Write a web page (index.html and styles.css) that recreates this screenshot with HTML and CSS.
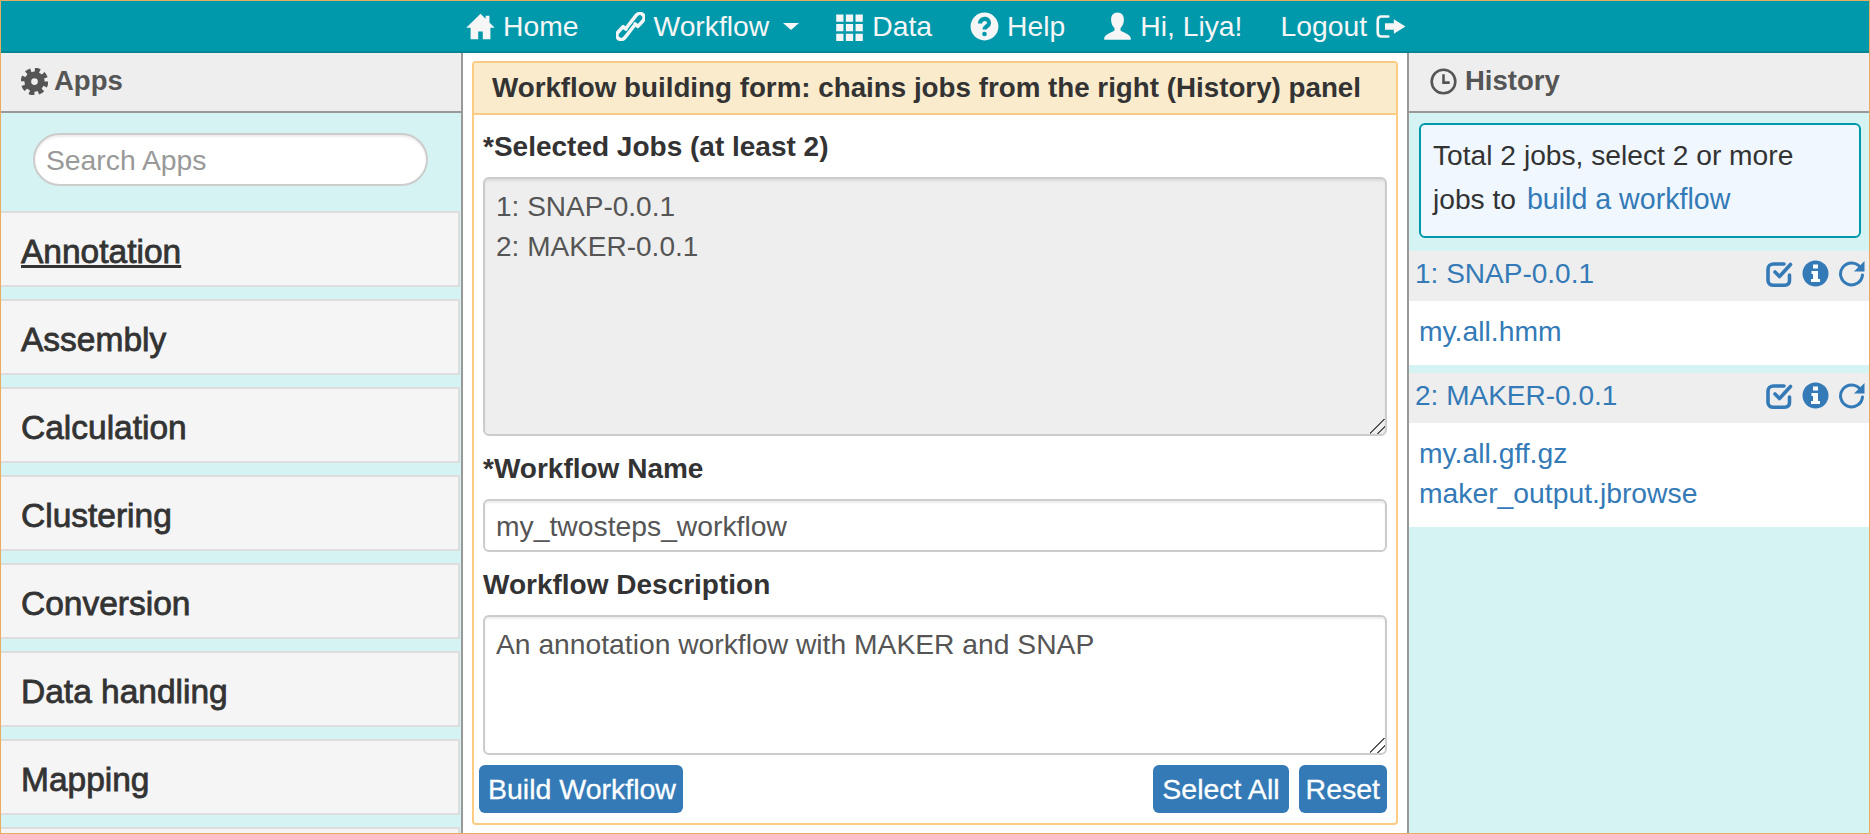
FILE: index.html
```html
<!DOCTYPE html>
<html lang="en">
<head>
  <meta charset="UTF-8">
  <title>Workflow</title>
  <link rel="stylesheet" href="styles.css">
</head>
<body>
<div class="app">

  <nav class="navbar">
    <a class="nav-item">
      <svg class="ico" viewBox="0 0 24 24"><path d="M12 1.5 .2 13h3.6v9.600h6.300v-6.400h3.800v6.400h6.300V13h3.600l-4.400-4.300V3h-3.200v2.600z"/></svg>
      Home
    </a>
    <a class="nav-item">
      <svg class="ico" viewBox="2 2 20 20"><path class="line" d="M9.500 12.500 16 4.200c1.500-1.600 3.300-1.500 4.500-.4s1.300 3 0 4.400l-3.400 3.700-2-1.700M14.500 11.500 8 19.800c-1.500 1.600-3.300 1.500-4.500.4s-1.300-3 0-4.400l3.400-3.700 2 1.700"/></svg>
      Workflow <span class="caret"></span>
    </a>
    <a class="nav-item">
      <svg class="ico" viewBox="0 0 24 24"><path d="M1 2h6v6H1zM9 2h6v6H9zM17 2h6v6h-6zM1 10h6v6H1zM9 10h6v6H9zM17 10h6v6h-6zM1 18h6v6H1zM9 18h6v6H9zM17 18h6v6h-6z"/></svg>
      Data
    </a>
    <a class="nav-item">
      <svg class="ico" viewBox="0 0 24 24"><circle cx="12" cy="12" r="11.500"/><path class="cut" d="M8.300 9.500c0-5 7.500-5 7.500-.5 0 2.800-3.800 2.800-3.800 5.500"/><circle class="cut-dot" cx="12" cy="18.200" r="1.900"/></svg>
      Help
    </a>
    <a class="nav-item">
      <svg class="ico" viewBox="0 0 24 24"><path d="M12 .5c3.500 0 5.300 2.500 5.300 6 0 3-1.300 5.500-2.800 6.800v1.900c0 1.500 8.500 2.800 8.500 6.800v1H1v-1c0-4 8.500-5.300 8.500-6.800v-1.900C8 12 6.700 9.500 6.700 6.500c0-3.500 1.800-6 5.300-6z"/></svg>
      Hi, Liya!
    </a>
    <a class="nav-item">
      Logout
      <svg class="ico ico-wide" viewBox="0 0 28 24"><path class="line" d="M12 3H6C3.500 3 2.500 4.500 2.500 6.500v11c0 2 1 3.500 3.500 3.500h6"/><path d="M17 5.500 27.500 12 17 18.500V15H9V9h8z"/></svg>
    </a>
  </nav>

  <div class="columns">

    <aside class="side-left">
      <div class="side-head">
        <svg class="ico-head" viewBox="0 0 24 24"><circle class="gear-ring" cx="12" cy="12" r="6"/><circle class="gear-teeth" cx="12" cy="12" r="10"/></svg>
        Apps
      </div>
      <div class="search-wrap">
        <input class="search" type="text" placeholder="Search Apps">
      </div>
      <ul class="app-list">
        <li class="app-item"><a class="active">Annotation</a></li>
        <li class="app-item"><a>Assembly</a></li>
        <li class="app-item"><a>Calculation</a></li>
        <li class="app-item"><a>Clustering</a></li>
        <li class="app-item"><a>Conversion</a></li>
        <li class="app-item"><a>Data handling</a></li>
        <li class="app-item"><a>Mapping</a></li>
        <li class="app-item"></li>
      </ul>
    </aside>

    <main class="middle">
      <form class="panel">
        <div class="panel-head">Workflow building form: chains jobs from the right (History) panel</div>
        <div class="panel-body">
          <label class="field-label first" for="jobs">*Selected Jobs (at least 2)</label>
          <textarea class="field jobs" id="jobs" readonly>1: SNAP-0.0.1
2: MAKER-0.0.1</textarea>

          <label class="field-label" for="wfname">*Workflow Name</label>
          <input class="field wfname" id="wfname" type="text" value="my_twosteps_workflow">

          <label class="field-label" for="wfdesc">Workflow Description</label>
          <textarea class="field desc" id="wfdesc">An annotation workflow with MAKER and SNAP</textarea>

          <div class="actions">
            <button class="btn btn-build" type="button">Build Workflow</button>
            <div class="actions-right">
              <button class="btn btn-select" type="button">Select All</button>
              <button class="btn btn-reset" type="button">Reset</button>
            </div>
          </div>
        </div>
      </form>
    </main>

    <aside class="side-right">
      <div class="side-head side-head-right">
        <svg class="ico-head" viewBox="0 0 24 24"><circle class="clock" cx="12" cy="12" r="10.500"/><path class="clock" d="M12 5.500V13h5.500"/></svg>
        History
      </div>
      <div class="notice">
        <div>Total 2 jobs, select 2 or more</div>
        <div>jobs to <a class="link notice-link">build a workflow</a></div>
      </div>

      <div class="job-head">
        <a class="link">1: SNAP-0.0.1</a>
        <span class="job-tools">
          <svg class="tool" viewBox="0 0 27 27"><path class="tool-line" d="M23.500 15v5.500c0 3-2 4.700-5 4.700H7.500c-3 0-5.500-1.700-5.500-4.700V9c0-3 2.500-5 5.500-5H18"/><path class="tool-line" d="m9 12 4.500 4.500L24.500 4.500"/></svg>
          <svg class="tool" viewBox="0 0 27 27"><circle class="tool-fill" cx="13.500" cy="13.500" r="13"/><path class="tool-cut" d="M11 4.500h5v4h-5zM9.500 11h6.500v8h2v3h-9v-3h2v-5h-1.500z"/></svg>
          <svg class="tool" viewBox="0 0 27 27"><path class="tool-line thin" d="M22.500 7.500A11 11 0 1 0 24.500 15"/><path class="tool-fill" d="M26.500 1v10.500H16z"/></svg>
        </span>
      </div>
      <div class="job-files">
        <a class="link">my.all.hmm</a>
      </div>

      <div class="job-head">
        <a class="link">2: MAKER-0.0.1</a>
        <span class="job-tools">
          <svg class="tool" viewBox="0 0 27 27"><path class="tool-line" d="M23.500 15v5.500c0 3-2 4.700-5 4.700H7.500c-3 0-5.500-1.700-5.500-4.700V9c0-3 2.500-5 5.500-5H18"/><path class="tool-line" d="m9 12 4.500 4.500L24.500 4.500"/></svg>
          <svg class="tool" viewBox="0 0 27 27"><circle class="tool-fill" cx="13.500" cy="13.500" r="13"/><path class="tool-cut" d="M11 4.500h5v4h-5zM9.500 11h6.500v8h2v3h-9v-3h2v-5h-1.500z"/></svg>
          <svg class="tool" viewBox="0 0 27 27"><path class="tool-line thin" d="M22.500 7.500A11 11 0 1 0 24.500 15"/><path class="tool-fill" d="M26.500 1v10.500H16z"/></svg>
        </span>
      </div>
      <div class="job-files">
        <a class="link">my.all.gff.gz</a>
        <a class="link">maker_output.jbrowse</a>
      </div>
    </aside>

  </div>
</div>
</body>
</html>
```

FILE: styles.css
```css
* { box-sizing: border-box; }
html, body { margin: 0; height: 100%; overflow: hidden; }
body { font-family: "Liberation Sans", Arial, sans-serif; font-size: 28px; color: #333; background: #fff; }

.app { height: 834px; border: 1px solid #e9ad62; display: flex; flex-direction: column; overflow: hidden; }

/* top bar */
.navbar { height: 52px; flex: none; background: #0099ac; border-bottom: 2px solid #008592; display: flex; justify-content: center; align-items: center; gap: 38px; padding-left: 2px; color: #f6f6f6; font-size: 28.300px; }
.nav-item { display: flex; align-items: center; gap: 8px; line-height: 40px; }
.ico { width: 29px; height: 29px; fill: currentColor; flex: none; }
.ico-wide { width: 31px; }
.ico .line { fill: none; stroke: currentColor; stroke-width: 2.400; stroke-linecap: round; stroke-linejoin: round; }
.ico .cut { fill: none; stroke: #0099ac; stroke-width: 3.400; }
.ico .cut-dot { fill: #0099ac; }
.caret { width: 0; height: 0; margin: 0 -2px 0 6px; border-top: 7px solid currentColor; border-left: 8px solid transparent; border-right: 8px solid transparent; }

.columns { flex: 1; min-height: 0; display: grid; grid-template-columns: 462px 1fr 462px; }

/* side panels */
.side-left { background: #d5f3f3; border-right: 2px solid #999; overflow: hidden; }
.side-right { background: #d5f3f3; border-left: 2px solid #999; overflow: hidden; }
.side-head { height: 60px; background: #eee; border-bottom: 2px solid #999; display: flex; align-items: center; gap: 6px; padding: 0 0 2px 20px; font-weight: bold; font-size: 27.500px; color: #555; }
.side-head-right { padding-left: 21px; gap: 8px; }
.ico-head { width: 27px; height: 27px; flex: none; }
.gear-ring { fill: none; stroke: #555; stroke-width: 6; }
.gear-teeth { fill: none; stroke: #555; stroke-width: 4.500; stroke-dasharray: 4.400 3.450; }
.clock { fill: none; stroke: #555; stroke-width: 2.300; }

.search-wrap { padding: 20px 33px 25px 32px; }
.search { display: block; width: 100%; height: 53px; border: 2px solid #ccc; border-radius: 27px; padding: 2px 11px 0; font: inherit; font-size: 28.300px; color: #555; background: #fff; box-shadow: inset 0 2px 2px rgba(0,0,0,.075); }
.search::placeholder { color: #999; }

.app-list { list-style: none; margin: 0 1px 0 0; padding: 0; }
.app-item { height: 76px; margin-bottom: 12px; padding: 6px 0 0 20px; background: #f5f5f5; border: 2px solid #ddd; border-left: 0; display: flex; align-items: center; font-size: 33.500px; color: #333; -webkit-text-stroke: .8px #333; }
.app-item .active { text-decoration: underline; text-underline-offset: 2px; }

/* middle form */
.middle { padding: 8px 9px; min-width: 0; }
.panel { height: 100%; border: 2px solid #fdcb82; border-radius: 4px; display: flex; flex-direction: column; }
.panel-head { height: 52px; flex: none; background: #faebcc; border-bottom: 2px solid #fdcb82; padding-left: 18px; display: flex; align-items: center; font-weight: bold; font-size: 27.750px; }
.panel-body { padding: 0 9px; }
.field-label { display: block; font-weight: bold; line-height: 32px; margin: 17px 0 14px; }
.field-label.first { margin-top: 16px; }
.field { display: block; width: 100%; font: inherit; color: #555; border: 2px solid #ccc; border-radius: 6px; padding: 8px 11px; box-shadow: inset 0 2px 2px rgba(0,0,0,.075); background: #fff; }
.field::-webkit-resizer { background: linear-gradient(135deg, transparent 46%, #555 46%, #555 53%, transparent 53%, transparent 72%, #555 72%, #555 79%, transparent 79%); }
.jobs { height: 259px; background: #eee; line-height: 40px; }
.wfname { height: 53px; padding-top: 10px; font-size: 28.300px; }
.desc { height: 140px; line-height: 34px; padding-top: 10px; font-size: 28.250px; }

.actions { display: flex; justify-content: space-between; margin: 10px 0 0 -4px; }
.actions-right { display: flex; gap: 10px; }
.btn { height: 48px; border: 0; border-radius: 6px; background: #337ab7; color: #fff; font: inherit; font-size: 28.500px; -webkit-text-stroke: .3px #fff; }
.btn-build { padding: 0 7px 0 9px; }
.btn-select { padding: 0 9px; }
.btn-reset { padding: 0 7px; }

/* history */
.link { color: #337ab7; }
.notice { margin: 10px 8px 13px 10px; height: 115px; padding: 8px 12px 0; background: #f0f7ff; border: 2px solid #0099ac; border-radius: 6px; line-height: 44px; font-size: 28.200px; }
.notice-link { margin-left: 3px; font-size: 28.600px; }
.job-head { height: 50px; background: #eee; display: flex; justify-content: space-between; align-items: center; padding: 0 4px 5px 6px; }
.job-tools { display: flex; gap: 9px; }
.tool { width: 27px; height: 27px; }
.tool-line { fill: none; stroke: #337ab7; stroke-width: 3.600; stroke-linecap: round; stroke-linejoin: round; }
.tool-line.thin { stroke-width: 3; }
.tool-fill { fill: #337ab7; }
.tool-cut { fill: #fff; }
.job-files { background: #fff; padding: 10px 10px 14px; margin-bottom: 8px; display: flex; flex-direction: column; line-height: 40px; font-size: 28.300px; }
```
